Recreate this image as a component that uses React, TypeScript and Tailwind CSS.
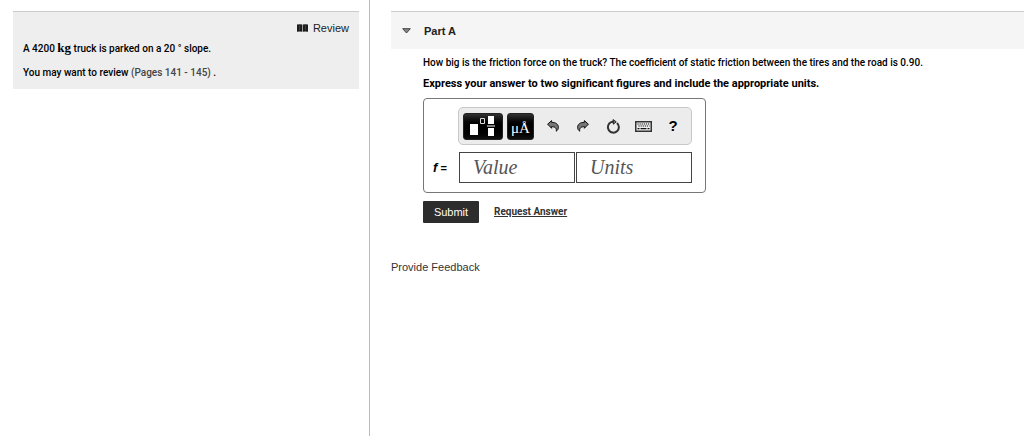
import { useState } from 'react';

function BookIcon() {
  return (
    <svg width="11" height="8" viewBox="0 0 11 8" aria-hidden="true">
      <path d="M0 .6Q3 0 5.2.6V7.8Q3 7 0 7.8ZM5.8.6Q8 0 11 .6V7.8Q8 7 5.8 7.8Z" fill="#1c1c1c" />
      <path d="M2.6 1.2v5M8.4 1.2v5" stroke="#555" strokeWidth=".6" />
    </svg>
  );
}

function TemplateIcon() {
  return (
    <svg width="26" height="22" viewBox="0 0 26 22" aria-hidden="true">
      <path d="M0 9h8v11H0zM18 1h6v8h-6zM18 13h6v8h-6z" fill="#fff" />
      <path d="M17 11h8" stroke="#fff" strokeWidth="1" />
      <path d="M10.5 3.5h4v5h-4z" fill="none" stroke="#ddd" />
    </svg>
  );
}

function UndoIcon({ flip = false }: { flip?: boolean }) {
  return (
    <svg width="12" height="12" viewBox="0 0 12 12" className={flip ? '-scale-x-100' : ''} aria-hidden="true">
      <path
        d="M.6 4.2 4.6.6v1.7c4.2 0 6.8 2 6.8 5 0 1.7-.8 3-2.2 3.9.7-2.8-.8-4.4-4.6-4.6v1.7z"
        fill="#777"
        stroke="#111"
        strokeLinejoin="round"
      />
    </svg>
  );
}

function ResetIcon() {
  return (
    <svg width="15" height="15" viewBox="0 0 15 15" aria-hidden="true">
      <path d="M10.9 3.9A5.5 5.5 0 1 1 5.2 3.1L8 2.6" fill="none" stroke="#333" strokeWidth="2" />
      <path d="M7 .6 10.2 2.8 7.4 5.2z" fill="#888" stroke="#111" strokeWidth=".9" strokeLinejoin="round" />
    </svg>
  );
}

function KeyboardIcon() {
  return (
    <svg width="17" height="11" viewBox="0 0 17 11" aria-hidden="true">
      <rect x=".75" y=".75" width="15.5" height="9.5" fill="#eee" stroke="#333" strokeWidth="1.5" />
      <path d="M2.5 3h12M3.5 5h11" stroke="#111" strokeWidth="1.2" strokeDasharray="1.2 .9" />
      <path d="M2.5 7.7h2M5.5 7.7h6M12.5 7.7h2" stroke="#111" strokeWidth="1.3" />
    </svg>
  );
}

const DARK_KEY =
  'flex h-[27px] items-center justify-center rounded-[3px] border border-[#222] bg-linear-to-b from-[#333] via-black to-[#111] text-white';
const TOOL = 'flex h-6 w-[30px] items-center justify-center';
const FIELD =
  'h-[31px] w-[116px] rounded-none border border-[#444] bg-white px-[13px] font-["Liberation_Serif",serif] text-[20px] italic leading-6 text-[#444] outline-none placeholder:text-[#555]';
const PROSE = 'font-[Roboto,Arial,sans-serif] text-[10px] leading-4 font-medium';

export default function App() {
  const [open, setOpen] = useState(true);
  const [value, setValue] = useState('');
  const [units, setUnits] = useState('');

  return (
    <div className='flex min-h-screen bg-white font-["Liberation_Sans",Arial,sans-serif] text-[11px] leading-4 text-black'>
      {/* Problem statement */}
      <aside className="w-[370px] shrink-0 border-r border-[#bbb] pt-[11px] pr-[10px] pl-[13px]">
        <div className="border-t border-[#ccc] bg-[#eee] px-[10px] pt-2 pb-2">
          <div className="flex justify-end">
            <a href="#review" className="flex items-center gap-[5px] text-[#222]">
              <BookIcon />
              Review
            </a>
          </div>
          <p className={`${PROSE} mt-[5px]`}>
            A 4200 <span className='font-["Liberation_Serif",serif] text-[13px] leading-none font-bold'>kg</span> truck is parked on a 20 ° slope.
          </p>
          <p className={`${PROSE} mt-2`}>
            You may want to review <a href="#pages" className="text-[#444]">(Pages 141 - 145)</a> .
          </p>
        </div>
      </aside>

      {/* Question */}
      <main className="min-w-0 flex-1 pt-[11px] pl-[21px]">
        <h2 className="border-t border-[#ccc] bg-[#f5f5f5]">
          <button
            type="button"
            aria-expanded={open}
            onClick={() => setOpen(!open)}
            className="flex h-[37px] w-full items-center gap-[13px] pl-[11px] font-bold text-[#222]"
          >
            <svg width="9" height="6" viewBox="0 0 9 6" className={open ? '' : '-rotate-90'} aria-hidden="true">
              <path d="M.7.7h7.6L4.5 5z" fill="#888" stroke="#333" strokeWidth=".9" />
            </svg>
            Part A
          </button>
        </h2>

        {open && (
          <section className="pt-[6px] pr-4 pl-8">
            <p className={PROSE}>
              How big is the friction force on the truck? The coefficient of static friction between the tires and the road is 0.90.
            </p>
            <p className="mt-[5px] font-[Roboto,Arial,sans-serif] font-bold">
              Express your answer to two significant figures and include the appropriate units.
            </p>

            <form onSubmit={e => e.preventDefault()}>
              <div className="mt-[6px] w-fit rounded-[4px] border border-[#777] pt-2 pr-[13px] pb-[9px] pl-[9px]">
                <div className="ml-[25px] flex h-[38px] items-center rounded-[5px] border border-[#c8c8c8] bg-[#ececec] pl-1">
                  <button type="button" aria-label="Templates" className={`${DARK_KEY} w-10`}>
                    <TemplateIcon />
                  </button>
                  <button
                    type="button"
                    aria-label="Symbols"
                    className={`${DARK_KEY} ml-1 w-[27px] pt-1 font-["Liberation_Serif",serif] text-[15px]`}
                  >
                    μÅ
                  </button>
                  <div className="ml-1 flex">
                    <button type="button" aria-label="Undo" className={TOOL}><UndoIcon /></button>
                    <button type="button" aria-label="Redo" className={TOOL}><UndoIcon flip /></button>
                    <button type="button" aria-label="Reset" className={TOOL}><ResetIcon /></button>
                    <button type="button" aria-label="Keyboard shortcuts" className={TOOL}><KeyboardIcon /></button>
                    <button type="button" aria-label="Help" className={`${TOOL} text-[15px] font-bold`}>?</button>
                  </div>
                </div>

                <div className="mt-[7px] flex items-center">
                  <label htmlFor="value" className="w-[26px] font-bold">
                    <i className="text-[13px]">f</i> =
                  </label>
                  <div className="flex gap-px">
                    <input
                      id="value"
                      value={value}
                      onChange={e => setValue(e.target.value)}
                      placeholder="Value"
                      className={FIELD}
                    />
                    <input
                      aria-label="Units"
                      value={units}
                      onChange={e => setUnits(e.target.value)}
                      placeholder="Units"
                      className={FIELD}
                    />
                  </div>
                </div>
              </div>

              <div className="mt-2 flex items-center gap-[15px]">
                <button type="submit" className="h-[22px] w-14 rounded-[1px] bg-[#2d2d2d] text-white">Submit</button>
                <a href="#answer" className="font-[Roboto,Arial,sans-serif] text-[10px] font-bold text-[#333] underline">Request Answer</a>
              </div>
            </form>
          </section>
        )}

        <a href="#feedback" className="mt-9 inline-block text-[#333]">Provide Feedback</a>
      </main>
    </div>
  );
}
